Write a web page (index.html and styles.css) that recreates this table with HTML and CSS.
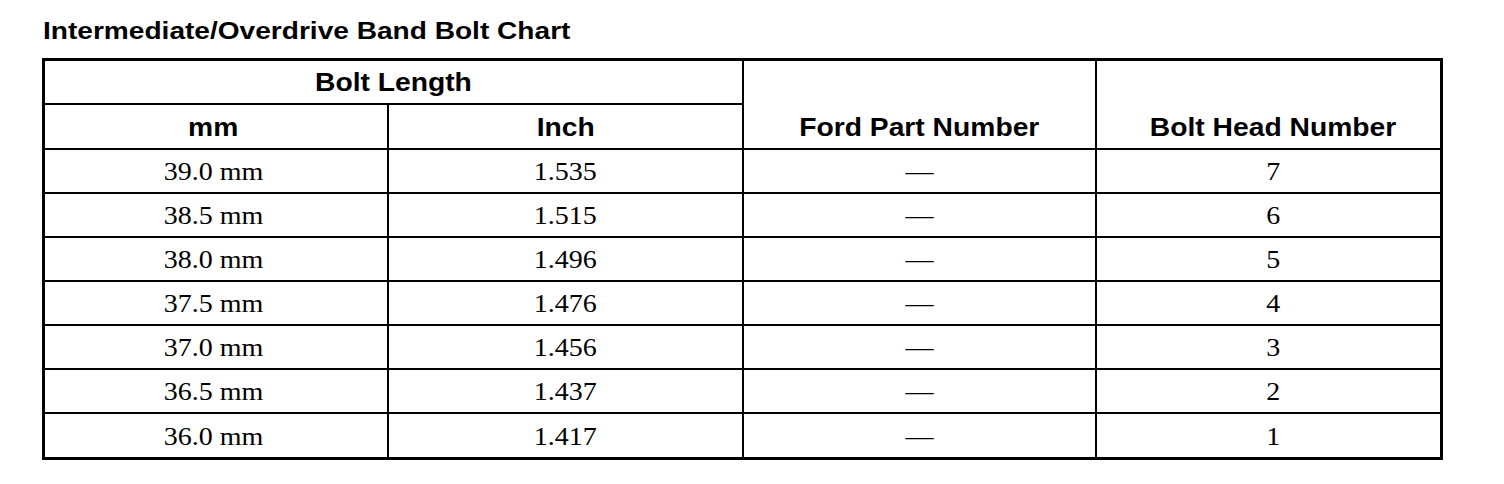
FILE: index.html
```html
<!DOCTYPE html>
<html lang="en">
<head>
<meta charset="utf-8">
<title>Intermediate/Overdrive Band Bolt Chart</title>
<link rel="stylesheet" href="styles.css">
</head>
<body>
<div class="page">
  <h1 class="title"><span class="sx">Intermediate/Overdrive Band Bolt Chart</span></h1>
  <table class="chart">
    <colgroup>
      <col class="w1"><col class="w2"><col class="w3"><col class="w4">
    </colgroup>
    <thead>
      <tr class="hr1">
        <th colspan="2" class="bb"><span class="sx">Bolt Length</span></th>
        <th rowspan="2" class="low"><span class="sx">Ford Part Number</span></th>
        <th rowspan="2" class="low last"><span class="sx">Bolt Head Number</span></th>
      </tr>
      <tr class="hr2">
        <th class="first"><span class="sx">mm</span></th>
        <th><span class="sx">Inch</span></th>
      </tr>
    </thead>
    <tbody>
      <tr><td class="first"><span class="sx">39.0 mm</span></td><td><span class="sx">1.535</span></td><td><span class="sx">—</span></td><td class="last"><span class="sx">7</span></td></tr>
      <tr><td class="first"><span class="sx">38.5 mm</span></td><td><span class="sx">1.515</span></td><td><span class="sx">—</span></td><td class="last"><span class="sx">6</span></td></tr>
      <tr><td class="first"><span class="sx">38.0 mm</span></td><td><span class="sx">1.496</span></td><td><span class="sx">—</span></td><td class="last"><span class="sx">5</span></td></tr>
      <tr><td class="first"><span class="sx">37.5 mm</span></td><td><span class="sx">1.476</span></td><td><span class="sx">—</span></td><td class="last"><span class="sx">4</span></td></tr>
      <tr><td class="first"><span class="sx">37.0 mm</span></td><td><span class="sx">1.456</span></td><td><span class="sx">—</span></td><td class="last"><span class="sx">3</span></td></tr>
      <tr><td class="first"><span class="sx">36.5 mm</span></td><td><span class="sx">1.437</span></td><td><span class="sx">—</span></td><td class="last"><span class="sx">2</span></td></tr>
      <tr class="lastrow"><td class="first"><span class="sx">36.0 mm</span></td><td><span class="sx">1.417</span></td><td><span class="sx">—</span></td><td class="last"><span class="sx">1</span></td></tr>
    </tbody>
  </table>
</div>
</body>
</html>
```
FILE: styles.css
```css
html, body {
  margin: 0;
  padding: 0;
  background: #fff;
  color: #000;
}

.page {
  padding: 18px 0 0 42px;
}

.sx {
  display: inline-block;
  white-space: nowrap;
}

.title {
  margin: 0 0 0 1px;
  height: 40px;
  font-family: "Liberation Sans", Arial, sans-serif;
  font-weight: bold;
  font-size: 24px;
  line-height: 25px;
}

.title .sx {
  transform: scaleX(1.17);
  transform-origin: left center;
}

.chart {
  width: 1401px;
  table-layout: fixed;
  border-collapse: separate;
  border-spacing: 0;
  border: 3px solid #000;
}

.w1 { width: 344px; }
.w2 { width: 355px; }
.w3 { width: 353px; }
.w4 { width: 343px; }

.chart th,
.chart td {
  padding: 0;
  text-align: center;
  border-right: 2px solid #000;
  border-bottom: 2px solid #000;
}

.chart .last {
  border-right: 0;
  padding-left: 9px;
}

.chart .first {
  padding-right: 5px;
}

.chart .lastrow td {
  border-bottom: 0;
}

.chart th {
  font-family: "Liberation Sans", Arial, sans-serif;
  font-weight: bold;
  font-size: 25px;
  line-height: 28px;
}

.chart th .sx {
  transform: scaleX(1.13);
}

.chart td {
  font-family: "Liberation Serif", "Times New Roman", serif;
  font-size: 25px;
  line-height: 28px;
  height: 40px;
  padding-top: 2px;
  vertical-align: middle;
}

.chart td .sx {
  transform: scaleX(1.12);
}

.hr1 th {
  height: 42px;
}

.hr2 th {
  height: 43px;
}

.chart th.low {
  vertical-align: bottom;
  padding-bottom: 7px;
}

.chart .lastrow td {
  height: 41px;
}
```
